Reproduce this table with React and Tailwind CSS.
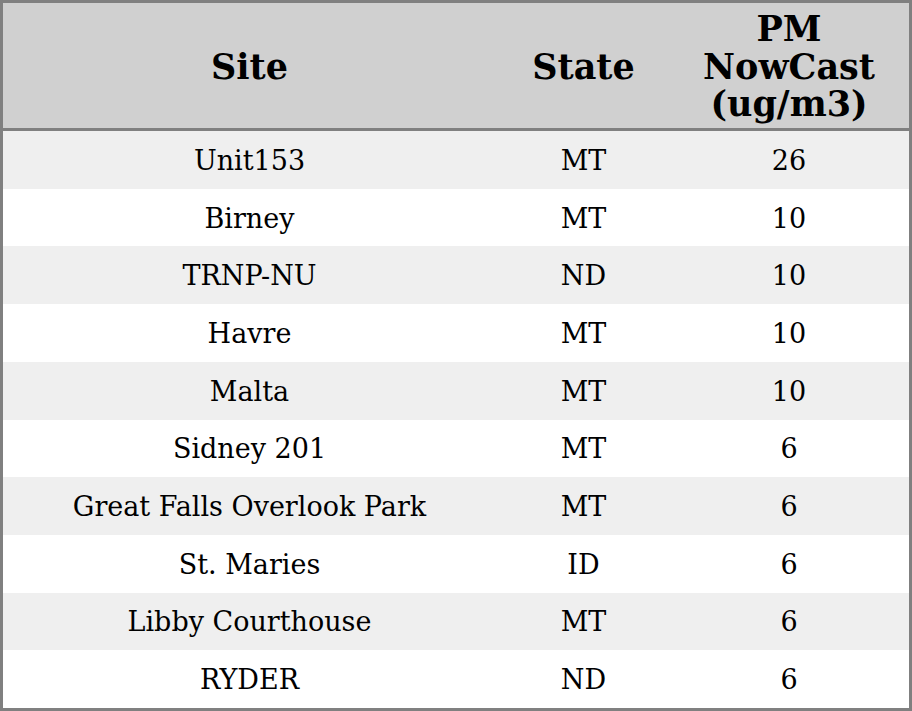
export default function App() {
  const rows = [
    ["Unit153", "MT", "26"],
    ["Birney", "MT", "10"],
    ["TRNP-NU", "ND", "10"],
    ["Havre", "MT", "10"],
    ["Malta", "MT", "10"],
    ["Sidney 201", "MT", "6"],
    ["Great Falls Overlook Park", "MT", "6"],
    ["St. Maries", "ID", "6"],
    ["Libby Courthouse", "MT", "6"],
    ["RYDER", "ND", "6"],
  ];
  return (
    <div className="w-[912px] h-[711px] border-[3px] border-[#808080] bg-white flex flex-col text-black" style={{ fontFamily: '"DejaVu Serif", serif' }}>
      <div className="h-[128px] shrink-0 bg-[#d0d0d0] border-b-[3px] border-[#808080] flex items-center pt-[2px] text-[35px] font-bold leading-[37.5px]">
        <div className="w-[493px] text-center">Site</div>
        <div className="w-[175px] text-center">State</div>
        <div className="flex-1 text-center pr-[2px]">PM<br />NowCast<br />(ug/m3)</div>
      </div>
      <div className="flex-1 flex flex-col">
        {rows.map((r, i) => (
          <div key={i} className={`flex-1 flex items-center pt-[2px] text-[27px] leading-[30px] ${i % 2 === 0 ? "bg-[#efefef]" : "bg-white"}`}>
            <div className="w-[493px] text-center">{r[0]}</div>
            <div className="w-[175px] text-center">{r[1]}</div>
            <div className="flex-1 text-center pr-[2px]">{r[2]}</div>
          </div>
        ))}
      </div>
    </div>
  );
}
